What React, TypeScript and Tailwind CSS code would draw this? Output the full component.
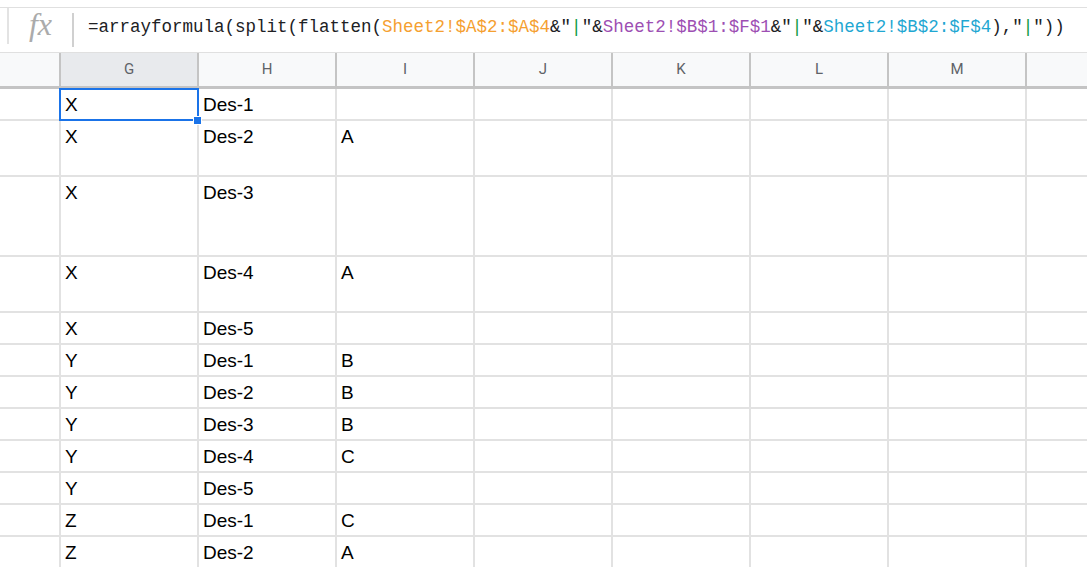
import React from "react";

const rows: { g: string; h: string; i: string; hgt: string }[] = [
  { g: "X", h: "Des-1", i: "", hgt: "h-[32px]" },
  { g: "X", h: "Des-2", i: "A", hgt: "h-[56px]" },
  { g: "X", h: "Des-3", i: "", hgt: "h-[80px]" },
  { g: "X", h: "Des-4", i: "A", hgt: "h-[56px]" },
  { g: "X", h: "Des-5", i: "", hgt: "h-[32px]" },
  { g: "Y", h: "Des-1", i: "B", hgt: "h-[32px]" },
  { g: "Y", h: "Des-2", i: "B", hgt: "h-[32px]" },
  { g: "Y", h: "Des-3", i: "B", hgt: "h-[32px]" },
  { g: "Y", h: "Des-4", i: "C", hgt: "h-[32px]" },
  { g: "Y", h: "Des-5", i: "", hgt: "h-[32px]" },
  { g: "Z", h: "Des-1", i: "C", hgt: "h-[32px]" },
  { g: "Z", h: "Des-2", i: "A", hgt: "h-[32px]" },
];

const cols = ["J", "K", "L", "M"];

function Cell({ text }: { text: string }) {
  return (
    <div className="w-[138px] shrink-0 border-r-2 border-[#e2e2e2] pl-[4px] pt-[5px] text-[19px] leading-[22px] text-black">
      {text}
    </div>
  );
}

export default function App() {
  const orange = "text-[#f5a030]";
  const purple = "text-[#9d4fb3]";
  const cyan = "text-[#1fa7d2]";
  const green = "text-[#129a3f]";
  return (
    <div
      className="w-[1087px] h-[567px] overflow-hidden bg-white"
      style={{ fontFamily: "Arial, 'Liberation Sans', sans-serif" }}
    >
      {/* formula bar */}
      <div className="h-[7px] bg-white" />
      <div className="h-[45px] border-t border-[#e0e0e0] flex items-start relative">
        <div className="w-[2px] h-[36px] bg-[#e3e3e3] ml-[7px]" />
        <div
          className="w-[63px] h-[36px] flex items-center justify-center text-[#ababab] italic text-[32px] leading-none pb-[4px]"
          style={{ fontFamily: "'Liberation Serif', 'DejaVu Serif', serif" }}
        >
          fx
        </div>
        <div className="w-[2px] h-[34px] bg-[#d0d0d0] mt-[5px]" />
        <div
          className="pl-[14px] pt-[8px] text-[17.5px] leading-[22px] text-[#202124] whitespace-nowrap"
          style={{ fontFamily: "'Liberation Mono', 'DejaVu Sans Mono', monospace" }}
        >
          =arrayformula(split(flatten(
          <span className={orange}>Sheet2!$A$2:$A$4</span>&amp;"
          <span className={green}>|</span>"&amp;
          <span className={purple}>Sheet2!$B$1:$F$1</span>&amp;"
          <span className={green}>|</span>"&amp;
          <span className={cyan}>Sheet2!$B$2:$F$4</span>),"
          <span className={green}>|</span>"))
        </div>
      </div>

      {/* column header */}
      <div
        className="h-[37px] flex bg-[#f8f9fa] border-t border-[#e0e0e0] border-b-[3px] border-b-[#c4c4c4] text-[15px] text-[#5f6368]"
        style={{ fontFamily: "Roboto, Arial, sans-serif" }}
      >
        <div className="w-[61px] shrink-0 border-r-2 border-[#c4c4c4]" />
        <div className="w-[138px] shrink-0 border-r-2 border-[#c4c4c4] bg-[#e8eaed] flex items-center justify-center">
          G
        </div>
        <div className="w-[138px] shrink-0 border-r-2 border-[#c4c4c4] flex items-center justify-center">
          H
        </div>
        <div className="w-[138px] shrink-0 border-r-2 border-[#c4c4c4] flex items-center justify-center">
          I
        </div>
        {cols.map((c) => (
          <div
            key={c}
            className="w-[138px] shrink-0 border-r-2 border-[#c4c4c4] flex items-center justify-center"
          >
            {c}
          </div>
        ))}
        <div className="flex-1" />
      </div>

      {/* rows */}
      <div className="relative">
        {rows.map((r, idx) => (
          <div
            key={idx}
            className={`${r.hgt} box-border flex border-b-2 border-[#e2e2e2]`}
          >
            <div className="w-[61px] shrink-0 border-r-2 border-[#e2e2e2]" />
            <Cell text={r.g} />
            <Cell text={r.h} />
            <Cell text={r.i} />
            {cols.map((c) => (
              <Cell key={c} text="" />
            ))}
            <div className="flex-1" />
          </div>
        ))}
        {/* selection */}
        <div className="absolute left-[59px] top-[-1px] w-[140px] h-[33px] border-2 border-[#1a73e8] pointer-events-none" />
        <div className="absolute left-[193px] top-[27px] w-[9px] h-[9px] bg-[#1a73e8] border border-white pointer-events-none" />
      </div>
    </div>
  );
}
